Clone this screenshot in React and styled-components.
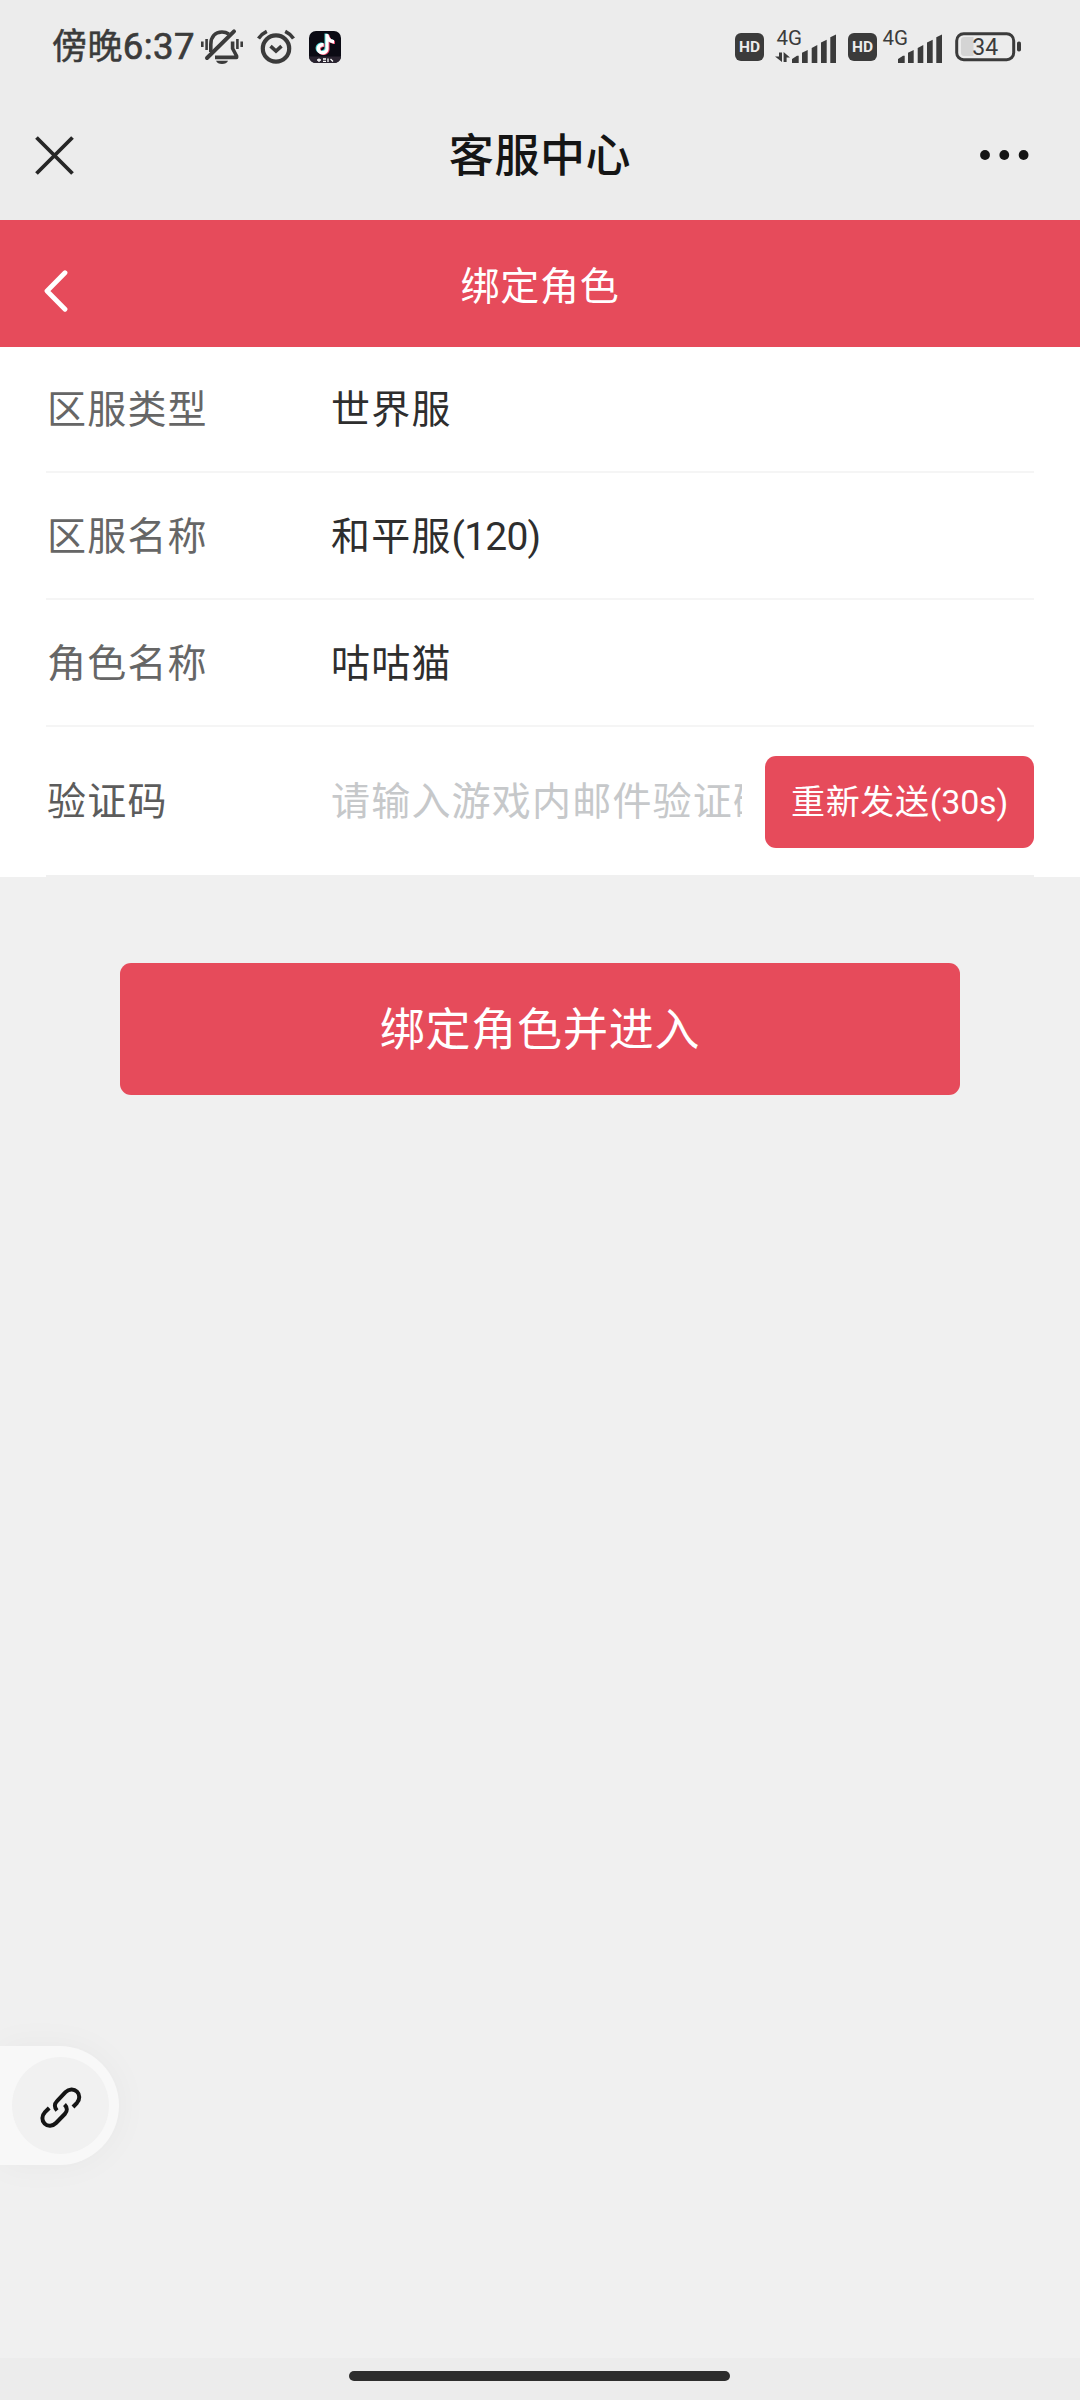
import React from "react";
import styled, { createGlobalStyle } from "styled-components";

const GlobalStyle = createGlobalStyle`
  * {
    box-sizing: border-box;
  }
  body {
    margin: 0;
    background: #f0f0f0;
    font-family: Roboto, "Noto Sans CJK SC", sans-serif;
  }
`;

const Page = styled.div`
    position: relative;
    display: flex;
    flex-direction: column;
    width: 1080px;
    height: 2400px;
    overflow: hidden;
    background: #f0f0f0;
`;

const StatusBar = styled.div`
    display: flex;
    justify-content: space-between;
    align-items: center;
    height: 94px;
    padding: 0 59px 0 52px;
    background: #ececec;
    color: #3b3b3b;
`;

const StatusGroup = styled.div`
    display: flex;
    align-items: center;
`;

const Clock = styled.span`
    width: 149px;
    padding-top: 1px;
    font-size: 35px;
    font-weight: 400;
    line-height: 50px;
    letter-spacing: 0.4px;
    white-space: nowrap;
    -webkit-text-stroke: 0.5px #3b3b3b;
`;

const ClockDigits = styled.span`
    font-size: 36.5px;
    -webkit-text-stroke: 0.7px #3b3b3b;
`;

const StatusIcon = styled.svg`
    display: block;
    flex: none;
    margin-left: ${(props) => props.$gap || 0}px;
    overflow: visible;
`;

const HdBadge = styled.span`
    display: flex;
    justify-content: center;
    align-items: center;
    width: 29px;
    height: 28px;
    margin-left: ${(props) => props.$gap || 0}px;
    border-radius: 6px;
    background: #3b3b3b;
    color: #ececec;
    font-size: 15.5px;
    font-weight: 700;
    line-height: 28px;
`;

const TitleBar = styled.header`
    display: flex;
    justify-content: space-between;
    align-items: center;
    height: 126px;
    padding: 0 51px 4px 35px;
    background: #ececec;
`;

const Title = styled.h1`
    margin: 0 0 0 26px;
    padding-top: 4px;
    color: #151515;
    font-size: 45px;
    font-weight: 500;
    line-height: 66px;
    letter-spacing: 0.6px;
`;

const PageHeader = styled.div`
    display: grid;
    grid-template-columns: 100px 1fr 100px;
    align-items: center;
    height: 127px;
    background: #e64b5b;
    color: #fff;
`;

const BackIcon = styled.svg`
    display: block;
    margin: 14px 0 0 43px;
`;

const PageTitle = styled.h2`
    margin: 0;
    padding-top: 7px;
    font-size: 39px;
    font-weight: 400;
    line-height: 58px;
    letter-spacing: 0.8px;
    text-align: center;
`;

const Form = styled.div`
    display: flex;
    flex-direction: column;
    padding: 0 46px;
    background: #fff;
`;

const Row = styled.div`
    display: flex;
    align-items: center;
    height: ${(props) => props.$height}px;
    padding-top: 2px;
    border-bottom: 2px solid ${(props) => (props.$last ? "#f0f0f0" : "#f5f5f5")};
    font-size: 39px;
    line-height: 58px;
    letter-spacing: 1.2px;
`;

const Label = styled.span`
    width: 285px;
    padding-left: 1px;
    color: ${(props) => (props.$dark ? "#5c5c5c" : "#666")};
`;

const Value = styled.span`
    color: #2e2e2e;
`;

const Latin = styled.span`
    letter-spacing: ${(props) => props.$spacing}px;
`;

const Placeholder = styled.span`
    width: 411px;
    overflow: hidden;
    color: #c6c8ca;
    white-space: nowrap;
`;

const ResendButton = styled.button`
    width: 269px;
    height: 92px;
    margin-left: auto;
    padding: 0;
    border: none;
    border-radius: 11px;
    background: #e64b5b;
    color: #fff;
    font-family: inherit;
    font-size: 34px;
    line-height: 50px;
    letter-spacing: 0.7px;
    white-space: nowrap;
`;

const SubmitButton = styled.button`
    width: 840px;
    height: 132px;
    margin: 86px auto 0;
    padding: 4px 0 0;
    border: none;
    border-radius: 11px;
    background: #e64b5b;
    color: #fff;
    font-family: inherit;
    font-size: 45px;
    line-height: 66px;
    letter-spacing: 0.8px;
`;

const FloatingTab = styled.div`
    position: absolute;
    left: 0;
    top: 2046px;
    display: flex;
    align-items: center;
    width: 119px;
    height: 119px;
    padding-left: 12px;
    border-radius: 0 60px 60px 0;
    background: #f8f8f8;
    box-shadow: 0 0 36px rgba(0, 0, 0, 0.04);
`;

const FloatingCircle = styled.div`
    display: flex;
    justify-content: center;
    align-items: center;
    width: 97px;
    height: 97px;
    padding-top: 4px;
    border-radius: 50%;
    background: #f1f1f1;
`;

const NavBar = styled.div`
    display: flex;
    justify-content: center;
    height: 42px;
    margin-top: auto;
    padding: 13px 1px 0 0;
    background: #ececec;
`;

const HomeIndicator = styled.div`
    width: 381px;
    height: 10px;
    border-radius: 5px;
    background: #2d2d2d;
`;

const INK = "#3b3b3b";

function MuteIcon() {
    return (
        <StatusIcon width="42" height="36" viewBox="0 0 42 36" fill="none" stroke={INK} strokeWidth="3.6">
            <path d="M9.8 23V15.5C9.8 8 14 3 21 3C23.8 3 26 3.8 27.8 5" />
            <path d="M31.6 12.5V19.5L35.6 27V28.4H14" strokeLinejoin="round" />
            <path d="M6 29L33 2.4" strokeLinecap="round" strokeWidth="4" />
            <path d="M15 31.8H27C26 34 24 35 21 35S16 34 15 31.8Z" fill={INK} stroke="none" />
            <path d="M1.3 12.5V18M5.6 10V21M36.4 10V20M40.7 12.5V18" strokeWidth="2.6" />
        </StatusIcon>
    );
}

function AlarmIcon() {
    return (
        <StatusIcon $gap={14} width="38" height="36" viewBox="0 0 38 36" fill="none" stroke={INK}>
            <circle cx="19" cy="19.5" r="13.2" strokeWidth="4.2" />
            <path d="M13.5 17.2L19 22L24.5 17.2" strokeWidth="3.6" />
            <path d="M1.5 9.5C3.5 6.5 6.5 4 9.8 2.4M36.5 9.5C34.5 6.5 31.5 4 28.2 2.4" strokeWidth="3.6" />
        </StatusIcon>
    );
}

function DouyinIcon() {
    const note = "M16.5 3H19.4C19.8 6.5 21.9 8.6 25 9V12.4C22.9 12.4 21.2 11.7 19.6 10.6V17.4C19.6 21 17 23.4 13.8 23.4C10.2 23.4 7.6 20.9 7.6 17.7C7.6 14.1 10.8 11.5 14.6 12.1V15.5C12.6 15 11 16.1 11 17.7C11 19.1 12.2 20 13.6 20C15.2 20 16.5 18.9 16.5 17.2Z";
    return (
        <StatusIcon $gap={14} width="32" height="32" viewBox="0 0 32 32">
            <rect width="32" height="32" rx="7" fill="#0b0b14" />
            <path d={note} fill="#4fd8d8" transform="translate(-1 -0.6)" />
            <path d={note} fill="#e8476b" transform="translate(1 0.7)" />
            <path d={note} fill="#fff" />
            <path d="M0 25.5H32C31.6 29.6 29 32 25 32H7C3 32 0.4 29.6 0 25.5Z" fill="#2a2430" />
            <path d="M8 29H12M10 27.5V31M14 28H17M14 30.4H17M19 27.6V31M21.5 28L24 30.5" stroke="#fff" strokeWidth="1.3" />
        </StatusIcon>
    );
}

function SignalIcon({ gap, arrows }) {
    return (
        <StatusIcon $gap={gap} width="62" height="32" viewBox="0 0 62 32" fill={INK}>
            <text x="1.6" y="13.6" fontSize="20.5" fontFamily="Roboto, sans-serif">
                4G
            </text>
            {arrows && (
                <path d="M4 21.5H7V31L0 25.4H4ZM8.6 31V21L15 26.4H11.6V31Z" />
            )}
            <path d="M17 32V28L22 24.8H23.7V32ZM27 32V21.8L32.7 19V32ZM36.7 32V17L42.3 14V32ZM46 32V11.5L51.7 8.7V32ZM55.3 32V6.3L61 3.5V32Z" />
        </StatusIcon>
    );
}

function BatteryIcon() {
    return (
        <StatusIcon $gap={12} width="66" height="30" viewBox="0 0 66 30">
            <rect x="1.7" y="1.7" width="57" height="26" rx="7" fill="none" stroke={INK} strokeWidth="3" />
            <path d="M9 5H18.5V24H9C7.3 24 6 22.7 6 21V8C6 6.3 7.3 5 9 5Z" fill="#d4d4d4" />
            <rect x="62" y="9.5" width="4" height="10" rx="1.8" fill={INK} />
            <text x="30.3" y="23" fontSize="23" textAnchor="middle" fill={INK} fontFamily="Roboto, sans-serif">
                34
            </text>
        </StatusIcon>
    );
}

const rows = [
    { label: "区服类型", value: "世界服", height: 126 },
    { label: "区服名称", value: "和平服", suffix: "(120)", height: 127 },
    { label: "角色名称", value: "咕咕猫", height: 127 },
];

export default function App() {
    return (
        <Page>
            <GlobalStyle />
            <StatusBar>
                <StatusGroup>
                    <Clock>
                        傍晚<ClockDigits>6:37</ClockDigits>
                    </Clock>
                    <MuteIcon />
                    <AlarmIcon />
                    <DouyinIcon />
                </StatusGroup>
                <StatusGroup>
                    <HdBadge>HD</HdBadge>
                    <SignalIcon gap={11} arrows />
                    <HdBadge $gap={11}>HD</HdBadge>
                    <SignalIcon gap={4} />
                    <BatteryIcon />
                </StatusGroup>
            </StatusBar>
            <TitleBar>
                <svg width="39" height="39" viewBox="0 0 39 39" stroke="#262626" strokeWidth="3.8">
                    <path d="M1.5 1.5L37.5 37.5M37.5 1.5L1.5 37.5" />
                </svg>
                <Title>客服中心</Title>
                <svg width="49" height="10" viewBox="0 0 49 10" fill="#151515">
                    <circle cx="5" cy="5" r="4.9" />
                    <circle cx="24.3" cy="5" r="4.9" />
                    <circle cx="43.6" cy="5" r="4.9" />
                </svg>
            </TitleBar>
            <PageHeader>
                <BackIcon width="27" height="42" viewBox="0 0 27 42" fill="none" stroke="#fff" strokeWidth="4.8" strokeLinecap="round" strokeLinejoin="round">
                    <path d="M22 2.8L4 21L22 39.2" />
                </BackIcon>
                <PageTitle>绑定角色</PageTitle>
            </PageHeader>
            <Form>
                {rows.map((row) => (
                    <Row key={row.label} $height={row.height}>
                        <Label>{row.label}</Label>
                        <Value>
                            {row.value}
                            {row.suffix && <Latin $spacing={-0.8}>{row.suffix}</Latin>}
                        </Value>
                    </Row>
                ))}
                <Row $height={150} $last>
                    <Label $dark>验证码</Label>
                    <Placeholder>请输入游戏内邮件验证码</Placeholder>
                    <ResendButton>
                        重新发送<Latin $spacing={-0.2}>(30s)</Latin>
                    </ResendButton>
                </Row>
            </Form>
            <SubmitButton>绑定角色并进入</SubmitButton>
            <FloatingTab>
                <FloatingCircle>
                    <svg width="42" height="42" viewBox="0 0 42 42" fill="none" stroke="#151515" strokeWidth="4">
                        <path d="M17 23.5C14.2 20.5 14.2 17 17 14.2L25.5 5.2C29 1.6 34 1.6 37 4.6C40 7.6 40 12.4 37 15.8L33 20" />
                        <path d="M24.5 17.5C27.5 20.5 27.5 24.2 24.8 27L16 36C12.6 39.4 7.6 39.6 4.6 36.6C1.6 33.6 1.6 28.8 5 25.2L9.2 21" />
                    </svg>
                </FloatingCircle>
            </FloatingTab>
            <NavBar>
                <HomeIndicator />
            </NavBar>
        </Page>
    );
}
